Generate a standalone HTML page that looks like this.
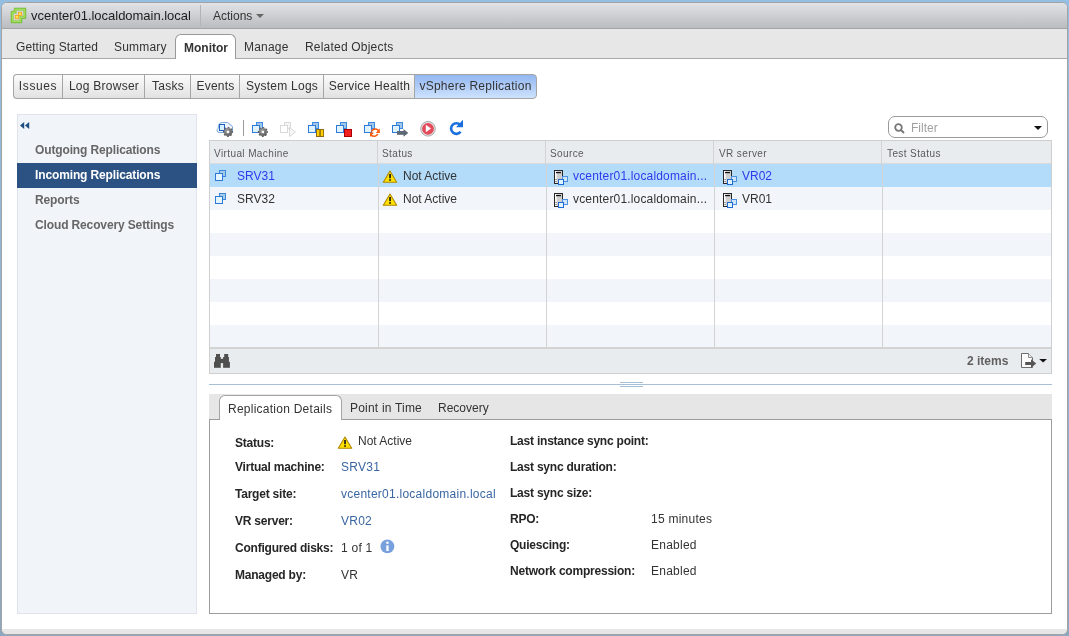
<!DOCTYPE html>
<html><head><meta charset="utf-8">
<style>
*{box-sizing:border-box;margin:0;padding:0}
html,body{width:1069px;height:636px;overflow:hidden;font-family:"Liberation Sans",sans-serif;}
.a,.sub,.si,.ht,.ct,.lbl,.val{will-change:transform}
body{position:relative;background:linear-gradient(#95bfe2,#8ca8c0)}
.a{position:absolute;white-space:nowrap}
#frame{position:absolute;left:1px;top:2px;width:1067px;height:633px;border:1px solid #a3a3a3;border-radius:6px;background:#fff;overflow:hidden}
#hdr{position:absolute;left:0;top:0;width:1065px;height:26px;background:linear-gradient(#e2e3e7,#bbbcc0);border-bottom:1px solid #a4a5a8}
#tabs{position:absolute;left:0;top:26px;width:1065px;height:30px;background:#e7e7e7;border-bottom:1px solid #a9a9a9}
#foot{position:absolute;left:0;top:626px;width:1065px;height:5px;background:#e6e6e6}
.tab{font-size:12px;color:#333;top:40px;letter-spacing:0.2px}
.sub{position:absolute;top:74px;height:25px;border-top:1px solid #a5a5a5;border-bottom:1px solid #a5a5a5;border-left:1px solid #a5a5a5;background:linear-gradient(#fbfbfb,#e2e2e2);font-size:12px;color:#333;line-height:22px;text-align:center;letter-spacing:0.25px}
#side{position:absolute;left:17px;top:114px;width:180px;height:500px;background:#f1f4f9;border:1px solid #dfe4ec}
.si{position:absolute;left:35px;font-size:12px;font-weight:bold;color:#666;letter-spacing:-0.13px}
#grid{position:absolute;left:209px;top:140px;width:843px;height:234px;border:1px solid #cfcfcf;background:#fff}
.gh{position:absolute;top:0;height:23px;background:#e9ecef;border-bottom:1px solid #dadada}
.col{position:absolute;top:0;width:1px;height:207px;background:#d3d3d3}
.row{position:absolute;left:0;width:841px;height:23px}
.ht{position:absolute;top:6px;font-size:10px;color:#5a5a5a;letter-spacing:0.4px}
.ct{position:absolute;font-size:12px;color:#333}
.lnk{color:#3038ec}
.lbl{position:absolute;font-size:12px;font-weight:bold;color:#262626;letter-spacing:-0.22px}
.val{position:absolute;font-size:12px;color:#333;letter-spacing:0.25px}
.vl{color:#3a66a3}
</style></head><body>
<div id="frame">
  <div id="hdr"></div>
  <div id="tabs"></div>
  <div id="foot"></div>
</div>

<!-- header -->
<svg class="a" style="left:8px;top:5px" width="20" height="20" viewBox="0 0 20 20">
  <path d="M6.3,3.2 H17.8 V13.4 H13.8 V17.8 H3.2 V6.3 H6.3 Z" fill="#84ca40" stroke="#72bd34" stroke-width="0.9" stroke-linejoin="round"/>
  <path d="M7.3,4.4 H16.6 V12.3 H12.6 V16.6 H4.4 V7.3 H7.3 Z" fill="none" stroke="#ace35f" stroke-width="0.9"/>
  <path d="M8.4,5.5 H15.5 V11.2 H11.5 V15.5 H5.5 V8.4 H8.4 Z" fill="#d8d8e0" stroke="#9ccf6a" stroke-width="0.4"/>
  <rect x="10.4" y="7.3" width="3.3" height="3.3" fill="#ffe455" stroke="#f2a81e" stroke-width="0.9"/>
  <rect x="7.3" y="10.4" width="3.3" height="3.3" fill="#ffe455" stroke="#f2a81e" stroke-width="0.9"/>
</svg>
<div class="a" style="left:31px;top:8px;font-size:13px;color:#1c1c1c;letter-spacing:-0.02px">vcenter01.localdomain.local</div>
<div class="a" style="left:200px;top:5px;width:1px;height:21px;background:#b3b4b7"></div>
<div class="a" style="left:213px;top:9px;font-size:12px;color:#333">Actions</div>
<svg class="a" style="left:256px;top:14px" width="8" height="5"><path d="M0 0h8l-4 4z" fill="#666"/></svg>

<!-- main tabs -->
<div class="a tab" style="left:16px;letter-spacing:0.08px">Getting Started</div>
<div class="a tab" style="left:114px">Summary</div>
<div class="a" style="left:175px;top:34px;width:61px;height:25px;background:#fff;border:1px solid #999;border-bottom:none;border-radius:6px 6px 0 0"></div>
<div class="a tab" style="left:184px;font-weight:bold;top:41px;letter-spacing:0">Monitor</div>
<div class="a tab" style="left:244px">Manage</div>
<div class="a tab" style="left:305px">Related Objects</div>

<!-- sub tabs -->
<div class="sub" style="left:13px;width:50px;border-radius:4px 0 0 4px;letter-spacing:0.6px;padding-right:1px">Issues</div>
<div class="sub" style="left:62px;width:83px">Log Browser</div>
<div class="sub" style="left:144px;width:47px">Tasks</div>
<div class="sub" style="left:190px;width:50px">Events</div>
<div class="sub" style="left:239px;width:85px">System Logs</div>
<div class="sub" style="left:323px;width:92px">Service Health</div>
<div class="sub" style="left:414px;width:123px;border-right:1px solid #a5a5a5;border-radius:0 4px 4px 0;background:linear-gradient(#93b7f2,#cde2fd);color:#333">vSphere Replication</div>

<!-- sidebar -->
<div id="side"></div>
<svg class="a" style="left:20px;top:122px" width="10" height="7" viewBox="0 0 10 7"><path d="M0 3.5L4.2 0v7z M5 3.5L9.2 0v7z" fill="#1f4d80"/></svg>
<div class="si" style="top:143px">Outgoing Replications</div>
<div class="a" style="left:17px;top:163px;width:180px;height:25px;background:#2b5283"></div>
<div class="si" style="top:168px;color:#fff">Incoming Replications</div>
<div class="si" style="top:193px">Reports</div>
<div class="si" style="top:218px">Cloud Recovery Settings</div>

<!-- filter -->
<div class="a" style="left:888px;top:116px;width:160px;height:22px;border:1px solid #9a9a9a;border-radius:7px;background:#fff"></div>
<svg class="a" style="left:894px;top:123px" width="11" height="11" viewBox="0 0 11 11"><circle cx="4.5" cy="4.5" r="3.3" fill="none" stroke="#777" stroke-width="1.8"/><path d="M7 7l3 3" stroke="#777" stroke-width="2"/></svg>
<div class="a" style="left:911px;top:121px;font-size:12px;color:#a0a0a0">Filter</div>
<svg class="a" style="left:1034px;top:126px" width="8" height="4"><path d="M0 0h8l-4 4z" fill="#111"/></svg>

<!-- grid -->
<div id="grid">
  <div class="gh" style="left:0;width:841px"></div>
  <div class="row" style="top:23px;background:#b3dcfb"></div>
  <div class="row" style="top:46px;background:#f2f5f9"></div>
  <div class="row" style="top:69px;background:#fff"></div>
  <div class="row" style="top:92px;background:#f2f5f9"></div>
  <div class="row" style="top:115px;background:#fff"></div>
  <div class="row" style="top:138px;background:#f2f5f9"></div>
  <div class="row" style="top:161px;background:#fff"></div>
  <div class="row" style="top:184px;background:#f2f5f9"></div>
  <div class="col" style="left:167px;height:23px"></div>
  <div class="col" style="left:335px;height:23px"></div>
  <div class="col" style="left:503px;height:23px"></div>
  <div class="col" style="left:671px;height:23px"></div>
  <div class="col" style="left:168px;top:23px;height:184px"></div>
  <div class="col" style="left:336px;top:23px;height:184px"></div>
  <div class="col" style="left:504px;top:23px;height:184px"></div>
  <div class="col" style="left:672px;top:23px;height:184px"></div>
  <div class="a" style="left:0;top:206px;width:841px;height:26px;background:#e9ecef;border-top:2px solid #d3d3d3"></div>
</div>
<div class="ht" style="left:214px;top:148px">Virtual Machine</div>
<div class="ht" style="left:382px;top:148px">Status</div>
<div class="ht" style="left:550px;top:148px">Source</div>
<div class="ht" style="left:719px;top:148px">VR server</div>
<div class="ht" style="left:887px;top:148px">Test Status</div>

<div class="ct lnk" style="left:237px;top:169px">SRV31</div>
<div class="ct" style="left:237px;top:192px">SRV32</div>
<div class="ct" style="left:403px;top:169px">Not Active</div>
<div class="ct" style="left:403px;top:192px">Not Active</div>
<div class="ct lnk" style="left:573px;top:169px;letter-spacing:0.17px">vcenter01.localdomain...</div>
<div class="ct" style="left:573px;top:192px;letter-spacing:0.17px">vcenter01.localdomain...</div>
<div class="ct lnk" style="left:742px;top:169px">VR02</div>
<div class="ct" style="left:742px;top:192px">VR01</div>

<div class="ct" style="left:967px;top:354px;color:#606060;font-weight:bold">2 items</div>

<!-- splitter -->
<div class="a" style="left:209px;top:384px;width:843px;height:1px;background:#a8bfd8"></div>
<div class="a" style="left:620px;top:382px;width:23px;height:1px;background:#a8bfd8"></div>
<div class="a" style="left:620px;top:386px;width:23px;height:1px;background:#a8bfd8"></div>

<!-- details panel -->
<div class="a" style="left:209px;top:394px;width:843px;height:26px;background:#e6e6e6"></div>
<div class="a" style="left:209px;top:419px;width:843px;height:195px;border:1px solid #9c9c9c;background:#fff"></div>
<div class="a" style="left:219px;top:395px;width:123px;height:25px;background:#fff;border:1px solid #a5a5a5;border-bottom:none;border-radius:6px 6px 0 0"></div>
<div class="a" style="left:228px;top:402px;font-size:12px;color:#333;letter-spacing:0.25px">Replication Details</div>
<div class="a" style="left:350px;top:401px;font-size:12px;color:#333;letter-spacing:0.2px">Point in Time</div>
<div class="a" style="left:438px;top:401px;font-size:12px;color:#333">Recovery</div>

<div class="lbl" style="left:235px;top:436px">Status:</div>
<div class="lbl" style="left:235px;top:460px">Virtual machine:</div>
<div class="lbl" style="left:235px;top:487px">Target site:</div>
<div class="lbl" style="left:235px;top:514px">VR server:</div>
<div class="lbl" style="left:235px;top:541px">Configured disks:</div>
<div class="lbl" style="left:235px;top:568px">Managed by:</div>

<div class="val" style="left:358px;top:434px;letter-spacing:0">Not Active</div>
<div class="val vl" style="left:341px;top:460px">SRV31</div>
<div class="val vl" style="left:341px;top:487px">vcenter01.localdomain.local</div>
<div class="val vl" style="left:341px;top:514px">VR02</div>
<div class="val" style="left:341px;top:541px">1 of 1</div>
<div class="val" style="left:341px;top:568px">VR</div>

<div class="lbl" style="left:510px;top:434px">Last instance sync point:</div>
<div class="lbl" style="left:510px;top:460px">Last sync duration:</div>
<div class="lbl" style="left:510px;top:486px">Last sync size:</div>
<div class="lbl" style="left:510px;top:512px">RPO:</div>
<div class="lbl" style="left:510px;top:538px">Quiescing:</div>
<div class="lbl" style="left:510px;top:564px">Network compression:</div>
<div class="val" style="left:651px;top:512px">15 minutes</div>
<div class="val" style="left:651px;top:538px">Enabled</div>
<div class="val" style="left:651px;top:564px">Enabled</div>

<svg class="a" style="left:380px;top:539px" width="16" height="16" viewBox="0 0 16 16"><circle cx="7.4" cy="7.4" r="6.9" fill="#78a0dc"/><path d="M6.3,6.4 H8.6 V12 H6.3Z" fill="#fff"/><circle cx="7.45" cy="3.7" r="1.3" fill="#fff"/></svg>

<!-- toolbar icons -->
<svg class="a" style="left:0;top:0" width="1069" height="636" viewBox="0 0 1069 636">
 <defs>
  <g id="pair">
   <rect x="4.5" y="0.5" width="6" height="6" fill="#9fc6e4" stroke="#3d8ae2"/>
   <rect x="0.5" y="3.5" width="7" height="7" fill="#dff3ff" stroke="#2f7ad9"/>
  </g>
  <radialGradient id="gg" cx="0.4" cy="0.35" r="0.7"><stop offset="0" stop-color="#a8a8a8"/><stop offset="1" stop-color="#555"/></radialGradient>
  <g id="gear">
   <circle cx="0" cy="0" r="4.4" fill="none" stroke="#5e5e5e" stroke-width="1.3" stroke-dasharray="1.75 1.705" transform="rotate(-12)"/>
   <circle cx="0" cy="0" r="4" fill="url(#gg)"/>
   <rect x="-1.1" y="-1.1" width="2.2" height="2.2" fill="#fff"/>
  </g>
  <g id="vm">
   <rect x="7.5" y="4.5" width="6" height="6" fill="#a5cbe6" stroke="#3a87de"/>
   <rect x="3.5" y="7.5" width="7" height="7" fill="#e3f5ff" stroke="#2f78d6"/>
  </g>
  <g id="warn">
   <path d="M10 5L3.3 16.3H16.7Z" fill="#ffe100" stroke="#b08800" stroke-width="1.1" stroke-linejoin="round"/>
   <rect x="9.2" y="8" width="1.7" height="4.2" fill="#1a1a1a"/>
   <rect x="9.2" y="13.2" width="1.7" height="1.6" fill="#1a1a1a"/>
  </g>
  <g id="host">
   <rect x="4.5" y="4.5" width="8" height="13" fill="#cfcfcf" stroke="#262626"/>
   <rect x="5" y="5" width="1.6" height="12" fill="#fff"/>
   <rect x="6" y="6" width="5" height="1.2" fill="#111"/>
   <rect x="5.5" y="13" width="1" height="1" fill="#444"/>
   <rect x="5.5" y="15" width="1" height="1" fill="#444"/>
   <rect x="12.5" y="10.5" width="5" height="5" fill="#cde5fa" stroke="#4d92e2"/>
   <rect x="8.5" y="13.5" width="5" height="5" fill="#e0f4ff" stroke="#1f6ad2"/>
  </g>
 </defs>
 <!-- icon1 cloud -->
 <path d="M219,132.5 C216.8,132.5 216.5,129.5 218.2,128.3 L218.5,125.5 C218.8,123.5 220.5,122.5 222.5,122.5 L227.5,122.5 L232.5,126.5 L232.5,132.5 Z" fill="#eef4fb" stroke="#78a8dc" stroke-width="1"/>
 <rect x="219.5" y="124.5" width="5" height="6" fill="#d9f1ff" stroke="#1f5fc0"/>
 <use href="#gear" x="228" y="132"/>
 <!-- separator -->
 <rect x="243" y="120" width="1" height="16" fill="#9a9a9a"/>
 <!-- icon2 -->
 <use href="#pair" x="252" y="122"/>
 <use href="#gear" x="262.9" y="132"/>
 <!-- icon3 disabled -->
 <g opacity="0.45">
  <rect x="284.5" y="122.5" width="6" height="6" fill="#e8e8e8" stroke="#aaa"/>
  <rect x="280.5" y="125.5" width="7" height="7" fill="#fff" stroke="#aaa"/>
  <path d="M289.5,127.5 L295.5,132 L289.5,136.5Z" fill="#eee" stroke="#aaa"/>
 </g>
 <!-- icon4 pause -->
 <use href="#pair" x="308" y="122"/>
 <rect x="316" y="129" width="8" height="8" fill="#8d6a12"/>
 <rect x="317" y="130" width="2.3" height="6" fill="#ffd000"/>
 <rect x="320.8" y="130" width="2.3" height="6" fill="#ffd000"/>
 <!-- icon5 stop -->
 <use href="#pair" x="336" y="122"/>
 <rect x="344.5" y="129.5" width="7" height="7" fill="#f21f1f" stroke="#a80000"/>
 <!-- icon6 sync -->
 <use href="#pair" x="364" y="122"/>
 <path d="M371.5,131.5 A4,3.6 0 0 1 378.5,130.5" fill="none" stroke="#ff5a0a" stroke-width="1.6"/>
 <path d="M379.8,128.5 L379.8,133 L375.8,133Z" fill="#ff5a0a"/>
 <path d="M377.8,134 A4,3.6 0 0 1 371,135" fill="none" stroke="#ff5a0a" stroke-width="1.6"/>
 <path d="M370,137 L370,132.6 L374,132.6Z" fill="#ff5a0a"/>
 <!-- icon7 arrow -->
 <use href="#pair" x="392" y="122"/>
 <rect x="397" y="131" width="7.5" height="3.8" fill="#5f6875"/>
 <path d="M403.5,129 L408.3,132.9 L403.5,136.8Z" fill="#5f6875"/>
 <!-- play button -->
 <circle cx="428" cy="128.8" r="7.3" fill="#e4e4e4" stroke="#a8a8a8" stroke-width="1"/>
 <circle cx="428" cy="128.8" r="5.9" fill="#e34a5a"/>
 <path d="M425.8,124.8 L431,128.6 L425.8,132.3Z" fill="#fff"/>
 <!-- refresh -->
 <path d="M460.3,125 A5.3,5.3 0 1 0 460.6,131.8" fill="none" stroke="#1a6fde" stroke-width="2.6"/>
 <path d="M463,119.8 L463,127.3 L456,127.3 Z" fill="#1a6fde"/>

 <!-- grid row icons -->
 <use href="#vm" x="212" y="166"/>
 <use href="#vm" x="212" y="189"/>
 <use href="#warn" x="380" y="166"/>
 <use href="#warn" x="380" y="189"/>
 <use href="#host" x="550" y="166"/>
 <use href="#host" x="550" y="189"/>
 <use href="#host" x="719" y="166"/>
 <use href="#host" x="719" y="189"/>

 <use href="#warn" x="335" y="432"/>
 <!-- binoculars -->
 <g fill="#4f4f4f">
  <rect x="216" y="354" width="4" height="3.3"/>
  <rect x="224.2" y="354" width="4" height="3.3"/>
  <rect x="215" y="357" width="5.8" height="5"/>
  <rect x="223.1" y="357" width="5.8" height="5"/>
  <rect x="220" y="358.8" width="4" height="4.3"/>
  <rect x="214" y="361.8" width="6.8" height="6"/>
  <rect x="223.1" y="361.8" width="6.8" height="6"/>
 </g>
 <!-- export -->
 <path d="M1021.5,353.5 H1028.5 L1032.5,357.5 V367.5 H1021.5Z" fill="#fbfbfb" stroke="#6d6d6d"/>
 <path d="M1028.5,353.5 V357.5 H1032.5" fill="#eee" stroke="#8a8a8a"/>
 <rect x="1025.2" y="362" width="6.3" height="3" fill="#555"/>
 <path d="M1031,359.2 L1036.2,363.5 L1031,367.8Z" fill="#555"/>
 <path d="M1039.2,359 H1047 L1043.1,362.4Z" fill="#111"/>
</svg>


</body></html>
